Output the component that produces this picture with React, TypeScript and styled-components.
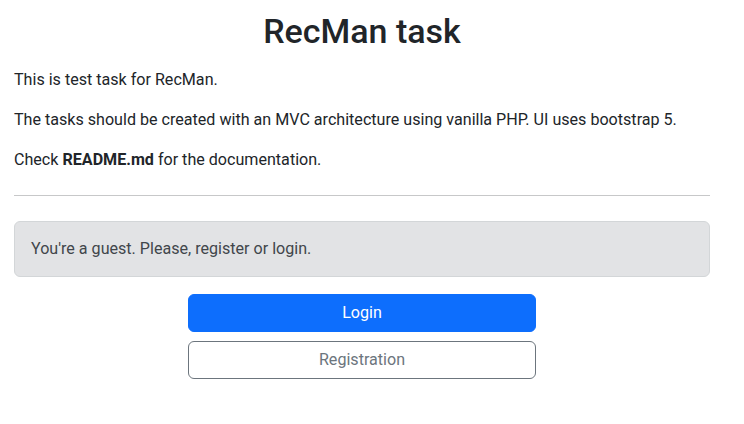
import React from "react";
import styled, { createGlobalStyle } from "styled-components";

const GlobalStyle = createGlobalStyle`
  *, *::before, *::after { box-sizing: border-box; }
  body {
    margin: 0;
    font-family: Roboto, "Liberation Sans", sans-serif;
    font-size: 16px;
    line-height: 1.5;
    color: #212529;
    background: #fff;
  }
`;

const Container = styled.main`
  width: 744px;
  padding: 11px 34px 0 14px;
`;

const Title = styled.h1`
  margin: 0 0 16px;
  font-size: 34px;
  font-weight: 500;
  line-height: 1.2;
  text-align: center;
`;

const Text = styled.p`
  margin: 0 0 16px;
  font-size: 16.1px;
`;

const Divider = styled.hr`
  margin: 23px 0 25px;
  border: 0;
  border-top: 1px solid #212529;
  opacity: 0.25;
`;

const Alert = styled.div`
  padding: 15px 16px;
  margin-bottom: 17px;
  color: #41464b;
  font-size: 16.1px;
  background: #e2e3e5;
  border: 1px solid #d3d6d8;
  border-radius: 6px;
`;

const Actions = styled.div`
  width: 348px;
  margin: 0 auto;
  display: flex;
  flex-direction: column;
  gap: 9px;
`;

const Button = styled.button<{ $variant: "primary" | "outline" }>`
  display: block;
  width: 100%;
  height: 38px;
  padding: 6px 12px;
  font: inherit;
  font-size: 16.1px;
  border-radius: 6px;
  cursor: pointer;
  border: 1px solid ${(p) => (p.$variant === "primary" ? "#0d6efd" : "#6c757d")};
  background: ${(p) => (p.$variant === "primary" ? "#0d6efd" : "#fff")};
  color: ${(p) => (p.$variant === "primary" ? "#fff" : "#6c757d")};
`;

const App = () => {
  return (
    <>
      <GlobalStyle />
      <Container>
        <Title>RecMan task</Title>
        <Text>This is test task for RecMan.</Text>
        <Text>The tasks should be created with an MVC architecture using vanilla PHP. UI uses bootstrap 5.</Text>
        <Text>
          Check <b>README.md</b> for the documentation.
        </Text>
        <Divider />
        <Alert>You're a guest. Please, register or login.</Alert>
        <Actions>
          <Button $variant="primary">Login</Button>
          <Button $variant="outline">Registration</Button>
        </Actions>
      </Container>
    </>
  );
};

export default App;
